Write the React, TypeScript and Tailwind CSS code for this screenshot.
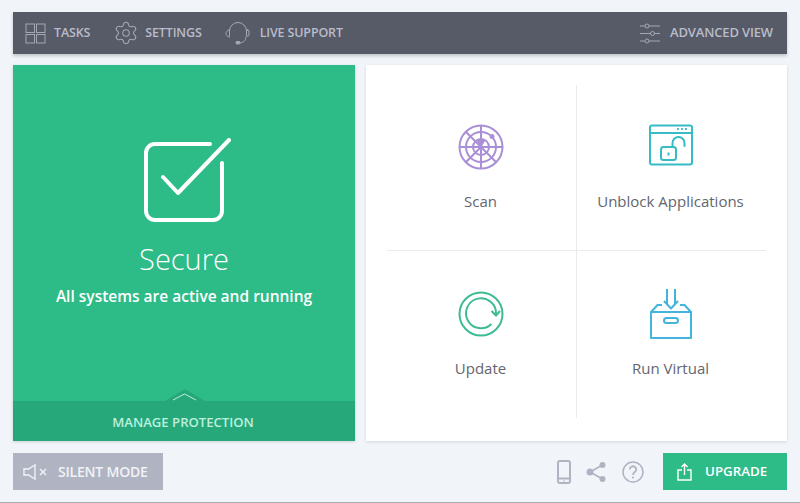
import { ReactNode } from "react";
import { Settings } from "lucide-react";

const font = { fontFamily: "'Open Sans', 'Noto Sans', sans-serif" };

function TasksIcon() {
  return (
    <svg width="21" height="21" viewBox="0 0 21 21" fill="none" stroke="#a4a7b4" strokeWidth="1">
      <rect x="1" y="1" width="8.500" height="8.500" />
      <rect x="11.500" y="1" width="8.500" height="8.500" />
      <rect x="1" y="11.500" width="8.500" height="8.500" />
      <rect x="11.500" y="11.500" width="8.500" height="8.500" />
    </svg>
  );
}

function HeadsetIcon() {
  return (
    <svg width="26" height="25" viewBox="0 0 26 25" fill="none" stroke="#a4a7b4" strokeWidth="1" strokeLinecap="round">
      <path d="M4.500 15V10a8.500 8.500 0 0 1 17 0v5" />
      <path d="M4.500 8.500C2 9.500 1 11 1 12.500s1 3 3.500 3.500" />
      <rect x="21.500" y="9" width="2.500" height="6" rx="1" />
      <path d="M21 16c0 4-3 6-7 6" />
      <rect x="11" y="20.500" width="4" height="2.500" rx="1" fill="#a4a7b4" />
    </svg>
  );
}

function SlidersIcon() {
  return (
    <svg width="22" height="21" viewBox="0 0 22 21" fill="none" stroke="#a4a7b4" strokeWidth="1">
      <path d="M1 3h5M10 3h11M1 10.500h10.500M15.500 10.500h5.500M1 18h5M10 18h11" />
      <circle cx="8" cy="3" r="2" />
      <circle cx="13.500" cy="10.500" r="2" />
      <circle cx="8" cy="18" r="2" />
    </svg>
  );
}

function ScanIcon() {
  return (
    <svg width="46" height="46" viewBox="0 0 46 46" fill="none" stroke="#a98fd6" strokeWidth="2">
      <circle cx="23" cy="23" r="21.500" />
      <circle cx="23" cy="23" r="15" />
      <circle cx="23" cy="23" r="8" />
      <path d="M23 1.500v43M1.500 23h43M7.800 7.800l30.400 30.400M7.800 38.200L23 23" />
      <path d="M23 23l-4-7 8 0z" fill="#a98fd6" strokeWidth="1" />
      <circle cx="34" cy="12.500" r="2.500" fill="#a98fd6" stroke="none" />
    </svg>
  );
}

function UnlockIcon() {
  return (
    <svg width="46" height="42" viewBox="0 0 46 42" fill="none" stroke="#35bcc6" strokeWidth="2">
      <rect x="2" y="1.500" width="42" height="39" rx="2" />
      <path d="M2 9h42" />
      <path d="M29 5h1.800M33 5h1.800M37 5h1.800" />
      <rect x="13" y="23" width="15" height="13" rx="2.500" />
      <path d="M20.500 28.500v3" />
      <path d="M24.500 23v-4a6 6 0 0 1 12 0v3" strokeLinecap="round" />
    </svg>
  );
}

function UpdateIcon() {
  return (
    <svg width="46" height="46" viewBox="0 0 46 46" fill="none" stroke="#3dbb94" strokeWidth="2">
      <circle cx="23" cy="23" r="21.500" />
      <path d="M33.500 33a15 15 0 1 1 4.500-10" />
      <path d="M33.500 20l4.500 4.500 4-4.500" />
    </svg>
  );
}

function BoxIcon() {
  return (
    <svg width="44" height="52" viewBox="0 0 44 52" fill="none" stroke="#43b5dc" strokeWidth="2" strokeLinejoin="round">
      <path d="M18 1v15M26 1v15" />
      <path d="M15 13l7 7.500 7-7.500" />
      <path d="M2 24l6.500-7H13M42 24l-6.500-7H31" />
      <path d="M2 24h40v26H2z" />
      <rect x="15" y="30" width="14" height="5" rx="2.500" />
    </svg>
  );
}

function PhoneIcon() {
  return (
    <svg width="14" height="24" viewBox="0 0 14 24" fill="none" stroke="#b0b3c1" strokeWidth="2">
      <rect x="1" y="1" width="12" height="22" rx="2" />
      <path d="M1 18.500h12" />
      <circle cx="7" cy="21" r="0.800" fill="#b0b3c1" stroke="none" />
    </svg>
  );
}

function ShareIcon() {
  return (
    <svg width="21" height="22" viewBox="0 0 21 22" fill="#b0b3c1" stroke="#b0b3c1" strokeWidth="1.600">
      <path d="M16.500 4L4 11l12.500 7" fill="none" />
      <circle cx="16.500" cy="4" r="3" stroke="none" />
      <circle cx="4" cy="11" r="3.500" stroke="none" />
      <circle cx="16.500" cy="18" r="3" stroke="none" />
    </svg>
  );
}

function HelpIcon() {
  return (
    <svg width="22" height="22" viewBox="0 0 22 22" fill="none" stroke="#b0b3c1" strokeWidth="1.500">
      <circle cx="11" cy="11" r="10" />
      <path d="M7.800 8.500a3.200 3.200 0 1 1 5 2.600c-1.200.8-1.800 1.400-1.800 2.900" strokeWidth="1.800" />
      <circle cx="11" cy="16.500" r="1.100" fill="#b0b3c1" stroke="none" />
    </svg>
  );
}

function MuteIcon() {
  return (
    <svg width="26" height="16" viewBox="0 0 26 16" fill="none" stroke="#f1f3f7" strokeWidth="1.400">
      <path d="M1 5h4.500L12 1v14l-6.500-4H1z" />
      <path d="M17 5l6 6M23 5l-6 6" />
    </svg>
  );
}

function UploadIcon() {
  return (
    <svg width="15" height="18" viewBox="0 0 15 18" fill="none" stroke="#ffffff" strokeWidth="1.400">
      <path d="M5 7H1v10h13V7h-4" />
      <path d="M7.500 12V1M4.500 4l3-3 3 3" />
    </svg>
  );
}

function NavItem({ icon, label, className }: { icon: ReactNode; label: string; className: string }) {
  return (
    <div className={`flex items-center ${className}`}>
      {icon}
      <span className="font-semibold text-[#b9bcc9] tracking-[-0.15px]">{label}</span>
    </div>
  );
}

function Tile({ icon, label, className }: { icon: ReactNode; label: string; className?: string }) {
  return (
    <div className={`flex flex-col items-center ${className ?? ""}`}>
      <div className="h-[52px] flex items-start">{icon}</div>
      <span className="text-[15px] text-[#63666e] mt-[15px] leading-[20px]">{label}</span>
    </div>
  );
}

export default function App() {
  return (
    <div style={font} className="w-[800px] h-[503px] bg-[#f1f5fa] border-b border-[#a9adb3] pt-3 px-[13px] overflow-hidden">
      <header className="h-[42px] w-[774px] bg-[#575a67] flex items-center justify-between pl-[12px] pr-[14px] shadow-[0_2px_3px_rgba(0,0,0,0.2)]">
        <div className="flex items-center gap-[23px]">
          <NavItem icon={<TasksIcon />} label="TASKS" className="gap-[8px] text-[12.500px]" />
          <NavItem icon={<Settings size={26} strokeWidth={1} color="#a4a7b4" />} label="SETTINGS" className="gap-[6px] text-[12.500px]" />
          <NavItem icon={<HeadsetIcon />} label="LIVE SUPPORT" className="gap-[9px] text-[12.500px]" />
        </div>
        <NavItem icon={<SlidersIcon />} label="ADVANCED VIEW" className="gap-[9px] text-[13px]" />
      </header>

      <main className="flex gap-[11px] mt-[11px] h-[376px]">
        <section className="w-[342px] bg-[#2dbb87] flex flex-col shadow-[0_1px_3px_rgba(0,0,0,0.15)]">
          <div className="flex-1 flex flex-col items-center pt-[73px] relative">
            <svg width="88" height="86" viewBox="0 0 88 86" fill="none" stroke="#ffffff" strokeWidth="4" strokeLinecap="round" strokeLinejoin="round" className="ml-[6px]">
              <path d="M67 6H12a9 9 0 0 0-9 9v58a9 9 0 0 0 9 9h58a9 9 0 0 0 9-9V25" />
              <path d="M20 39l15 16L86 2" />
            </svg>
            <div className="text-[29px] font-light text-white leading-[40px] mt-[15px]">Secure</div>
            <div className="text-[15.500px] font-semibold text-white leading-[20px] mt-[7px]">All systems are active and running</div>
            <svg width="40" height="12" viewBox="0 0 40 12" className="absolute bottom-0 left-[152px]">
              <path d="M0 12L20 0l20 12z" fill="#27a87a" />
              <path d="M8 11l11.500-6 11.500 6" fill="none" stroke="#bfeedd" strokeWidth="1" />
            </svg>
          </div>
          <div className="h-[40px] bg-[#27a87a] flex items-center justify-center pt-[3px] pr-[2px] text-[13.100px] font-semibold text-[#bdf0dc]">
            MANAGE PROTECTION
          </div>
        </section>

        <section className="w-[421px] bg-white px-[21px] pt-[20px] pb-[23px] shadow-[0_1px_3px_rgba(0,0,0,0.12)]">
          <div className="grid grid-cols-[190px_189px] grid-rows-[166px_167px] h-full">
            <Tile icon={<ScanIcon />} label="Scan" className="border-r border-b border-[#e9ebee] pt-[39px] pr-[2px]" />
            <Tile icon={<UnlockIcon />} label="Unblock Applications" className="border-b border-[#e9ebee] pt-[39px] pr-[2px]" />
            <Tile icon={<UpdateIcon />} label="Update" className="border-r border-[#e9ebee] pt-[40px] pr-[2px]" />
            <Tile icon={<div className="-mt-[3px]"><BoxIcon /></div>} label="Run Virtual" className="pt-[40px] pr-[2px]" />
          </div>
        </section>
      </main>

      <footer className="flex items-center justify-between mt-[12px] h-[37px]">
        <button className="w-[150px] h-full bg-[#b0b3c2] flex items-center gap-[9px] pl-[10px] text-[14px] font-semibold text-[#f1f3f7] tracking-[-0.2px]">
          <MuteIcon />
          SILENT MODE
        </button>
        <div className="flex items-center">
          <div className="flex items-center gap-[15px] mr-[19px]">
            <PhoneIcon />
            <ShareIcon />
            <HelpIcon />
          </div>
          <button className="w-[124px] h-[37px] bg-[#2dbb87] flex items-center gap-[13px] pl-[14px] text-[13.300px] font-semibold text-white">
            <UploadIcon />
            UPGRADE
          </button>
        </div>
      </footer>
    </div>
  );
}
